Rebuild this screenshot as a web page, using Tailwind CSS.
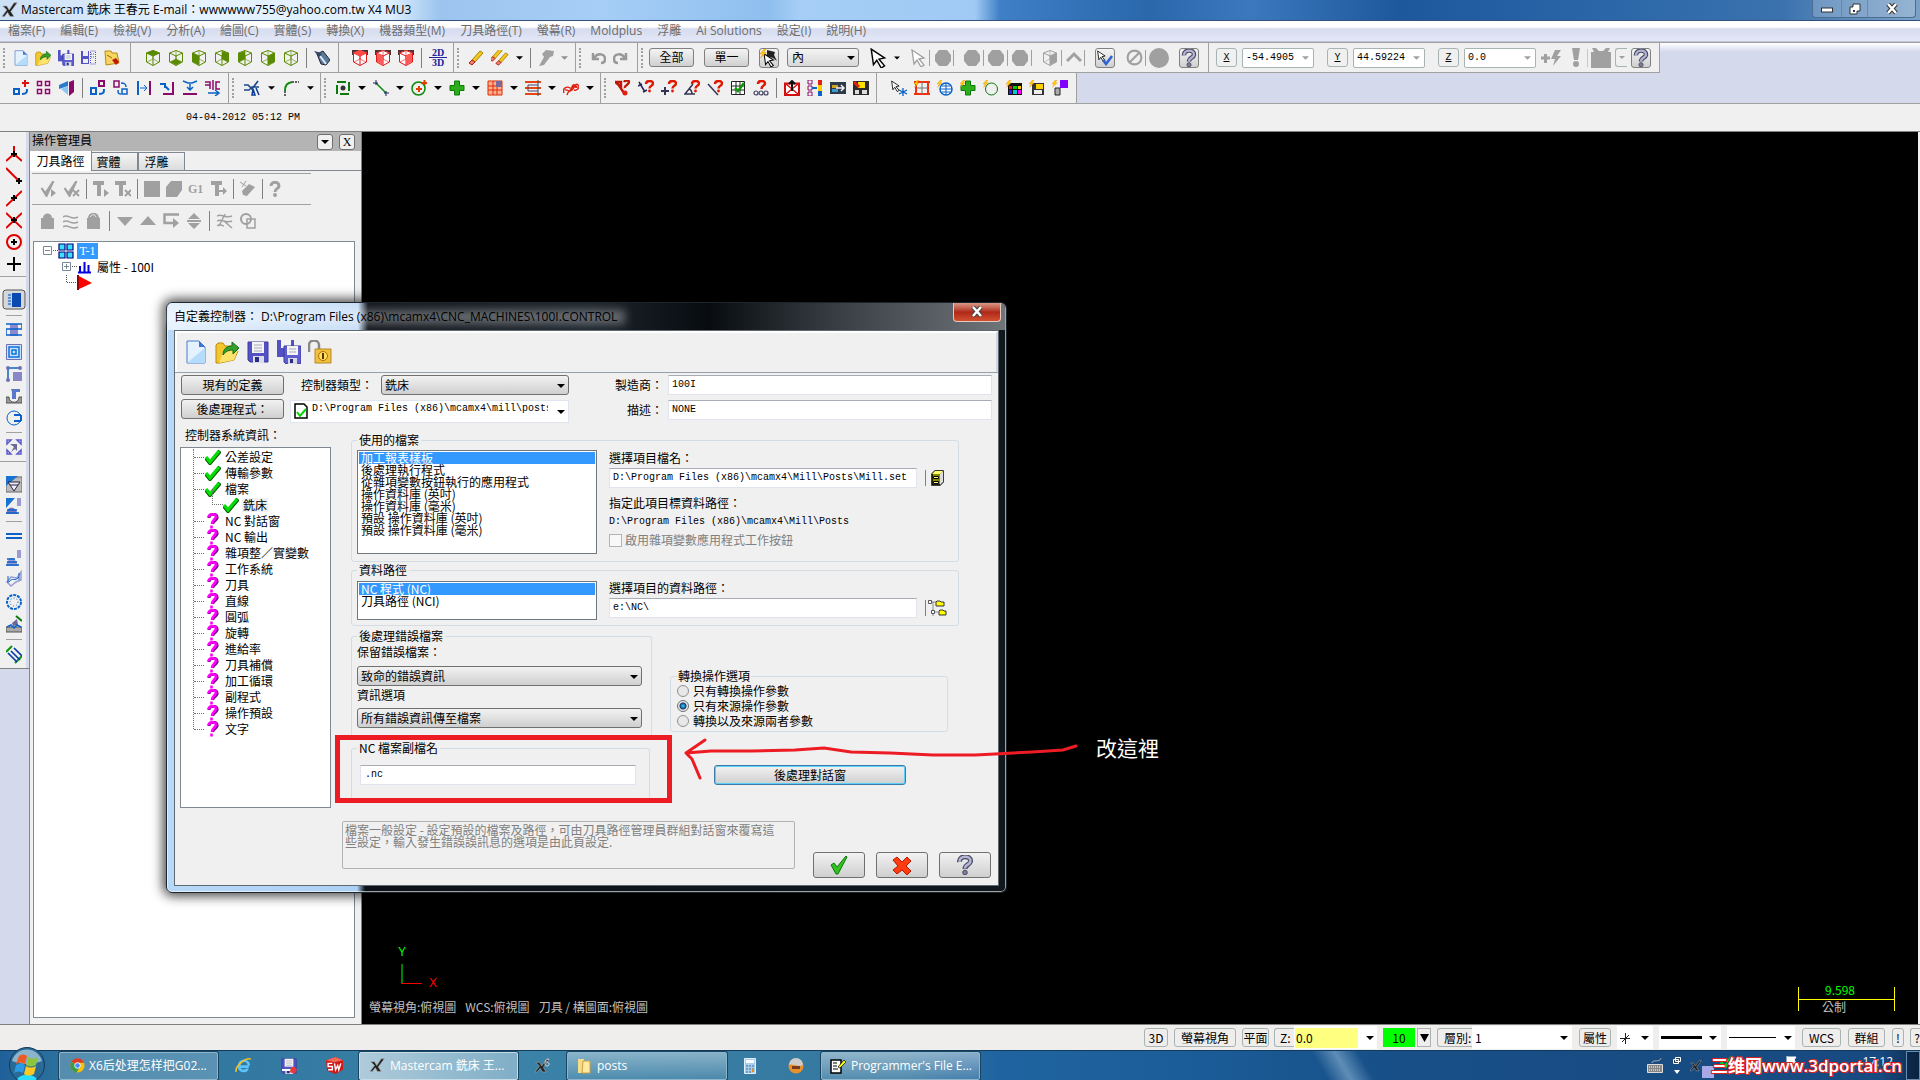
<!DOCTYPE html>
<html lang="zh-Hant">
<head>
    <meta charset="UTF-8">
    <meta name="viewport" content="width=device-width, initial-scale=1.0">
    <script src="https://cdn.jsdelivr.net/npm/@tailwindcss/browser@4"></script>
    <title>Mastercam X4</title>
</head>

<body class="relative h-screen flex flex-col overflow-hidden bg-[#f0f0f0] text-black text-[12px] leading-[14px] font-['Open_Sans','Noto_Sans_CJK_TC',sans-serif]">

    <!-- shared icons -->
    <svg class="hidden">
        <symbol id="arr" viewBox="0 0 8 4"><path d="M0 0h8L4 4z" fill="currentColor"/></symbol>
        <symbol id="new" viewBox="0 0 20 24"><path d="M1 1h12l6 6v16H1z" fill="#e4f1ff" stroke="#4a7bd0"/><path d="M1 23 19 8v15z" fill="#b5dcfa"/><path d="M13 1v6h6z" fill="#3f74d6"/></symbol>
        <symbol id="open" viewBox="0 0 24 24"><path d="M1 23V5l2-2h5l2 3h8v4l5 1-4 9-14 3z" fill="#f4c52c" stroke="#b88a10"/><path d="M4 23 8 12l15-2-4 10z" fill="#ffe36a"/><path d="M8 15c0-6 4-9 9-9V2l7 6-6 6v-4c-4 0-7 1-10 5z" fill="#35a02c" stroke="#146c14"/></symbol>
        <symbol id="disk" viewBox="0 0 22 22"><path d="M1 1h20v20H3l-2-2z" fill="#5252c4" stroke="#3c3ca0"/><path d="M5 1h12v11H5z" fill="#f4f4f4"/><path d="M7 4h8M7 7h8M7 10h8" stroke="#a8a8b8"/><path d="M6 15h11v7H6z" fill="#dcdce8"/><path d="M8 16h4v5H8z" fill="#2c2c80"/></symbol>
        <symbol id="disks" viewBox="0 0 24 24"><path d="M0 0h17v17H0z" fill="#5252c4"/><path d="M4 0h10v8H4z" fill="#f4f4f4"/><path d="M7 6h17v18H9l-2-2z" fill="#5e5ed0" stroke="#3c3ca0"/><path d="M10 6h11v9H10z" fill="#f4f4f4"/><path d="M12 9h7M12 12h7" stroke="#a8a8b8"/><path d="M11 18h9v6h-9z" fill="#d8d8e6"/><path d="M13 19h3v4h-3z" fill="#2c2c80"/></symbol>
        <symbol id="cube" viewBox="0 0 16 16"><path d="M8 .5 14.500 3v9L8 15.500 1.500 12V3zM1.500 3 8 6l6.500-3M8 6v9.500" fill="none" stroke="currentColor"/><path d="M8 1v8L2 12m6-3 6 3" fill="none" stroke="currentColor" stroke-width=".6"/></symbol>
        <symbol id="pencil" viewBox="0 0 16 16"><path d="M4 10 12 1l3 2-8 9z" fill="#f2c81e" stroke="#a88400"/><path d="m1 13 3-3 3 2-3 3z" fill="#f08070" stroke="#b02010"/></symbol>
        <symbol id="q" viewBox="0 0 16 20"><path d="M2.500 7C2 0 14 0 13.500 6.500 13 10 8 9.500 8 14" fill="none" stroke="#4a4a62" stroke-width="5"/><path d="M2.500 7C2 0 14 0 13.500 6.500 13 10 8 9.500 8 13.500" fill="none" stroke="#b4b4d4" stroke-width="2.500"/><circle cx="8" cy="17.500" r="2.300" fill="#7c7c98" stroke="#4a4a62"/></symbol>
        <symbol id="cursor" viewBox="0 0 16 18"><path d="M1 1l12 8-5 1 5 6-3 2-4-7-3 4z" fill="#fff" stroke="currentColor" stroke-width="1.300"/></symbol>
        <symbol id="bolt" viewBox="0 0 16 16"><path d="M6 0 0 7h4l-3 6 8-8H5l4-5z" fill="#ffd200" stroke="#f07800" stroke-width=".6"/></symbol>
        <symbol id="rq" viewBox="0 0 16 16"><path d="M8 4c0-4 7-4 7-.5 0 2.500-3.500 2-3.500 5" fill="none" stroke="#e01800" stroke-width="2.400"/><circle cx="11.500" cy="11" r="1.400" fill="#e01800"/></symbol>
        <symbol id="plus" viewBox="0 0 16 16"><path d="M5.500 1h5v4.500H15v5h-4.500V15h-5v-4.500H1v-5h4.500z" fill="#2cae1c" stroke="#0d7a08"/></symbol>
        <symbol id="ck" viewBox="0 0 16 16"><path d="M1 9l4 5L15 2" fill="none" stroke="#006000" stroke-width="4"/><path d="M1 8l4 5L14 2" fill="none" stroke="#00e000" stroke-width="3"/></symbol>
        <symbol id="mq" viewBox="0 0 12 16"><path d="M2 5c0-5 9-5 8 0-1 3-4 3-4.500 6" fill="none" stroke="#7a007a" stroke-width="3"/><path d="M1.500 4.500c0-4 8-4.500 7.500-.5-1 3-4 3-4 7M4.500 12.500v3" fill="none" stroke="#f0f" stroke-width="2.600"/></symbol>
        <symbol id="gck" viewBox="0 0 16 16"><path d="M1 7l4 5L13 0 6 15z" fill="#a0a0a0" stroke="#a0a0a0" stroke-width="2"/></symbol>
        <symbol id="blob" viewBox="0 0 16 18"><path d="M4 1h8l4 5v6l-4 5H4l-4-5V6z" fill="#a0a0a0"/></symbol>
        <symbol id="mx" viewBox="0 0 20 20"><path d="M1 5h5l3 5 6-9h4l-8 11 4 6h-5l-3-5-4 5H0l6-8z" fill="#222" stroke="#aaa" stroke-width=".8"/></symbol>
    </svg>

    <!-- title bar -->
    <header class="h-[21px] flex items-center pl-[2px] border-b border-[#33507a] bg-[linear-gradient(90deg,#cbdff5_0,#e6f2ff_200px,#deefff_390px,#9cc4ee_440px,#a6cef6_600px,#8fbfee_770px,#a6cef6_800px,#a0caf4_975px,#3f7fc6_1000px,#2a67ab_1150px,#3c78bd_1250px,#1d589c_1400px,#2a66a8_1600px,#3a72ae_1780px,#7aa0c6_1910px)]">
        <svg class="size-4"><use href="#mx"/></svg>
        <h1 class="ml-[3px] whitespace-nowrap">Mastercam 銑床 王春元 E-mail：wwwwww755@yahoo.com.tw X4 MU3</h1>
        <div class="ml-auto mr-[4px] h-[18px] self-start flex border border-t-0 border-[#4c6b90] rounded-b bg-white/20">
            <button aria-label="Minimize" class="w-[28px] grid place-items-center"><svg class="w-3 h-2"><rect x=".5" y="3" width="11" height="4" fill="#fff" stroke="#333"/></svg></button>
            <button aria-label="Restore" class="w-[27px] grid place-items-center border-x border-[#6d88a8]"><svg class="size-3"><path d="M4 1h7v7H8v3H1V4h3z" fill="#fff" stroke="#333"/><path d="M4 7h2v2H4z" fill="#335"/></svg></button>
            <button aria-label="Close" class="w-[47px] grid place-items-center"><svg class="w-3 h-3"><path d="M2 1l8 9M10 1l-8 9" stroke="#333" stroke-width="4.500"/><path d="M2 1l8 9M10 1l-8 9" stroke="#fff" stroke-width="2.500"/></svg></button>
        </div>
    </header>

    <!-- menu -->
    <nav class="h-[21px] flex items-center gap-[15px] pl-[8px] text-[#6c6c6c] whitespace-nowrap border-b border-[#c0c6d6] bg-linear-to-b from-white from-30% via-[#d6dcee] via-40% to-[#e4e8f8]">
        <a href="#">檔案(F)</a><a href="#">編輯(E)</a><a href="#">檢視(V)</a><a href="#">分析(A)</a><a href="#">繪圖(C)</a><a href="#">實體(S)</a><a href="#">轉換(X)</a><a href="#">機器類型(M)</a><a href="#">刀具路徑(T)</a><a href="#">螢幕(R)</a><a href="#">Moldplus</a><a href="#">浮雕</a><a href="#">Ai Solutions</a><a href="#">設定(I)</a><a href="#">說明(H)</a>
    </nav>

    <!-- toolbar row 1 -->
    <div class="h-[31px] flex border-t border-[#a0a0a0] bg-linear-to-b from-white to-[#d4d9ec] to-30% *:shrink-0 *:h-[30px] *:flex *:items-center *:bg-[#f0f0f0] *:border-r *:border-b *:border-[#a0a0a0]">
        <div class="w-[131px] gap-[7px] pl-[3px]">
            <i class="w-[4px] h-5 border-l-2 border-dotted border-[#a0a0a0]"></i>
            <svg class="w-[14px] h-4"><use href="#new"/></svg>
            <svg class="size-4"><use href="#open"/></svg>
            <svg class="size-4"><use href="#disks"/></svg>
            <svg class="size-4" viewBox="0 0 16 16"><path d="M0 1h8v13H0z" fill="#5252c4"/><path d="M2 1h5v5H2zM2 9h5v4H2z" fill="#eee"/><path d="M9.500 1h5v13h-5zM10 7h4M10 4h4" fill="none" stroke="#5252c4" stroke-dasharray="1 1"/></svg>
            <svg class="size-4" viewBox="0 0 16 16"><path d="M1 1h6l1 2h5l2 10-13 2z" fill="#f6d560" stroke="#b88a10"/><path d="M3 5l5 3" stroke="#a60"/><path d="M8 10l4-2 3 4-3 3z" fill="#c01808"/></svg>
        </div>
        <div class="w-[208px] gap-[7px] pl-[14px] text-[#5a8a00]">
            <svg class="size-4"><path d="M8 0l7 3-7 3-7-3z" fill="currentColor"/><use href="#cube"/></svg>
            <svg class="size-4"><use href="#cube"/><path d="M8 9l6 3-6 3-6-3z" fill="currentColor"/></svg>
            <svg class="size-4"><use href="#cube"/><path d="M2 3l6 3v9l-6-3z" fill="currentColor"/></svg>
            <svg class="size-4"><use href="#cube"/><path d="M8 1l6 2v9L8 9z" fill="currentColor"/></svg>
            <svg class="size-4"><use href="#cube"/><path d="M8 1 2 3v9l6-3z" fill="currentColor"/></svg>
            <svg class="size-4"><use href="#cube"/><path d="M14 3 8 6v9l6-3z" fill="currentColor"/></svg>
            <svg class="size-4"><use href="#cube"/></svg>
            <i class="w-px h-5 bg-[#808080]"></i>
            <svg class="size-4" viewBox="0 0 16 16"><path d="M3 4l6-3 7 9-4 5-5-1z" fill="#5a7a9a" stroke="#223"/><path d="M6 6l6 8" stroke="#dde8f8" stroke-width="2"/><path d="M0 1l4 1 4 2-3 3z" fill="#346"/></svg>
        </div>
        <div class="w-[115px] gap-[7px] pl-[13px] text-[#e01818]">
            <svg class="size-4"><path d="M0 0h16v5H0z" fill="#503030"/><path d="M8 0l7 3v9l-7 3-7-3V3z" fill="#fff"/><use href="#cube"/><path d="M8 0l7 3-7 3-7-3z" fill="#ff4a4a"/></svg>
            <svg class="size-4"><path d="M0 0h16v5H0z" fill="#503030"/><path d="M8 0l7 3v9l-7 3-7-3V3z" fill="#fff"/><use href="#cube"/><path d="M2 3l6 3v9l-6-3z" fill="#ff5a5a"/></svg>
            <svg class="size-4"><path d="M0 0h16v5H0z" fill="#503030"/><path d="M8 0l7 3v9l-7 3-7-3V3z" fill="#fff"/><use href="#cube"/><path d="M14 3 8 6v9l6-3z" fill="#ff5a5a"/></svg>
            <i class="w-px h-5 bg-[#808080]"></i>
            <button class="w-[18px] text-[10px] leading-[9px] font-bold text-[#20209a] font-['Liberation_Serif',serif]"><span class="block border-b border-[#20209a]">2D</span><span class="block">3D</span></button>
        </div>
        <div class="w-[122px] gap-[7px] pl-[3px]">
            <i class="w-[4px] h-5 border-l-2 border-dotted border-[#a0a0a0]"></i>
            <svg class="size-4"><use href="#pencil"/></svg>
            <svg class="w-[18px] h-4"><use href="#pencil" x="-2" y="-2" width="14" height="14"/><use href="#pencil" x="4" y="2" width="14" height="14"/></svg>
            <svg class="w-[7px] h-1"><use href="#arr"/></svg>
            <i class="w-px h-5 bg-[#808080]"></i>
            <svg class="size-4 text-[#a0a0a0]" viewBox="0 0 16 16"><path d="M4 4l4-4 8 1-1 5-3 1-6 8-5 1 5-9z" fill="currentColor"/></svg>
            <svg class="w-[7px] h-1 text-[#909090]"><use href="#arr"/></svg>
        </div>
        <div class="w-[62px] gap-[7px] pl-[3px]">
            <i class="w-[4px] h-5 border-l-2 border-dotted border-[#a0a0a0]"></i>
            <svg class="size-4" viewBox="0 0 16 16"><path d="M3 3v6h6M4 8c4-6 11-4 11 1 0 3-2 4-4 4" fill="none" stroke="#989898" stroke-width="2.500"/></svg>
            <svg class="size-4" viewBox="0 0 16 16"><path d="M13 3v6H7M12 8C8 2 1 4 1 9c0 3 2 4 4 4" fill="none" stroke="#989898" stroke-width="2.500"/></svg>
        </div>
        <div class="w-[571px] pl-[3px]">
            <i class="w-[8px] h-5 border-l-2 border-dotted border-[#a0a0a0]"></i>
            <button class="w-[45px] h-[19px] border border-[#808080] rounded-[3px] bg-linear-to-b from-[#f4f4f4] to-[#d0d0d0]">全部</button>
            <button class="ml-[10px] w-[45px] h-[19px] border border-[#808080] rounded-[3px] bg-linear-to-b from-[#f4f4f4] to-[#d0d0d0]">單一</button>
            <button aria-label="Quick select" class="ml-[10px] size-[20px] border border-[#808080] rounded-[3px] bg-linear-to-b from-[#f4f4f4] to-[#d0d0d0] grid place-items-center"><svg class="size-[18px]"><path d="M7 1l8 2-1 3 3 6-4-3-6-2z" fill="#222"/><use href="#cursor" x="3" y="4" width="13" height="14"/><use href="#bolt" width="11" height="11"/></svg></button>
            <div class="relative ml-[8px]">
                <select aria-label="Window mode" class="appearance-none w-[72px] h-[19px] pl-[4px] leading-[16px] border border-[#808080] rounded-[3px] bg-linear-to-b from-[#f4f4f4] to-[#d8d8d8]"><option>內</option></select>
                <svg class="absolute right-[4px] top-[8px] w-2 h-1 pointer-events-none"><use href="#arr"/></svg>
            </div>
            <svg class="ml-[11px] w-[18px] h-5"><use href="#cursor"/></svg>
            <svg class="ml-[6px] w-[6px] h-1"><use href="#arr"/></svg>
            <svg class="ml-[10px] w-[18px] h-[18px] text-[#a0a0a0]"><use href="#cursor"/></svg>
            <i class="w-px ml-[1px] h-4 bg-[#a0a0a0]"></i>
            <svg class="ml-[5px] w-4 h-[18px]"><use href="#blob"/></svg>
            <i class="ml-[2px] w-px h-4 bg-[#a0a0a0]"></i>
            <svg class="ml-[10px] w-4 h-[18px]"><use href="#blob"/></svg>
            <i class="ml-[3px] w-px h-4 bg-[#a0a0a0]"></i>
            <svg class="ml-[4px] w-4 h-[18px]"><use href="#blob"/></svg>
            <i class="ml-[3px] w-px h-4 bg-[#a0a0a0]"></i>
            <svg class="ml-[4px] w-4 h-[18px]"><use href="#blob"/></svg>
            <i class="ml-[3px] w-px h-4 bg-[#a0a0a0]"></i>
            <svg class="ml-[10px] size-4 text-[#a0a0a0]"><use href="#cube"/><path d="M8 6v9l6-3V3z" fill="#a0a0a0"/></svg>
            <i class="ml-[3px] w-px h-4 bg-[#a0a0a0]"></i>
            <svg class="ml-[4px] size-4" viewBox="0 0 16 16"><path d="M1 11 8 4l7 7" fill="none" stroke="#a0a0a0" stroke-width="3"/></svg>
            <i class="ml-[2px] w-px h-4 bg-[#a0a0a0]"></i>
            <button aria-label="Verify" class="ml-[10px] size-[20px] border border-[#808080] rounded-[3px] bg-linear-to-b from-[#f4f4f4] to-[#d0d0d0] grid place-items-center"><svg class="size-4"><use href="#cursor" width="10" height="12"/><path d="M6 10l3 4 6-8" fill="none" stroke="#2c62d0" stroke-width="2.500"/></svg></button>
            <svg class="ml-[11px] size-[17px]" viewBox="0 0 16 16"><circle cx="8" cy="8" r="6.500" fill="none" stroke="#a0a0a0" stroke-width="2"/><path d="M3 13 13 3" stroke="#a0a0a0" stroke-width="2"/></svg>
            <i class="ml-[2px] w-px h-4 bg-[#a0a0a0]"></i>
            <svg class="ml-[3px] w-5 h-5"><circle cx="10" cy="10" r="10" fill="#a0a0a0"/></svg>
            <button aria-label="Help" class="ml-[10px] size-[20px] border border-[#808080] rounded-[3px] bg-linear-to-b from-[#f4f4f4] to-[#d0d0d0] grid place-items-center"><svg class="w-4 h-[18px]"><use href="#q"/></svg></button>
        </div>
        <form class="w-[451px] pl-[7px] font-['Liberation_Mono',monospace] text-[10px]">
            <label for="x" class="w-[21px] h-[19px] grid place-items-center border border-[#a8b4b4] rounded-[3px] underline">X</label>
            <input id="x" value="-54.4905" class="ml-[5px] w-[72px] h-[20px] pl-[3px] border border-[#a8b4b4] rounded-[2px] bg-white">
            <svg class="-ml-[12px] w-[7px] h-1 text-[#a0a0a0]"><use href="#arr"/></svg>
            <label for="y" class="ml-[18px] w-[21px] h-[19px] grid place-items-center border border-[#a8b4b4] rounded-[3px] underline">Y</label>
            <input id="y" value="44.59224" class="ml-[5px] w-[72px] h-[20px] pl-[3px] border border-[#a8b4b4] rounded-[2px] bg-white">
            <svg class="-ml-[12px] w-[7px] h-1 text-[#a0a0a0]"><use href="#arr"/></svg>
            <label for="z" class="ml-[18px] w-[21px] h-[19px] grid place-items-center border border-[#a8b4b4] rounded-[3px] underline">Z</label>
            <input id="z" value="0.0" class="ml-[5px] w-[72px] h-[20px] pl-[3px] border border-[#a8b4b4] rounded-[2px] bg-white">
            <svg class="-ml-[12px] w-[7px] h-1 text-[#a0a0a0]"><use href="#arr"/></svg>
            <svg class="ml-[10px] w-5 h-4"><path d="M0 8h9M4.500 4v9" stroke="#a0a0a0" stroke-width="3"/><path d="M14 0h6l-4 6h4l-8 10 2-7h-4z" fill="#a0a0a0"/></svg>
            <svg class="ml-[11px] w-[8px] h-5"><path d="M0 0h8L6 12H2z" fill="#a0a0a0"/><circle cx="4" cy="16" r="3" fill="#a0a0a0"/></svg>
            <svg class="ml-[7px] w-[25px] h-5"><path d="M0 1v18" stroke="#a0a0a0"/><path d="M4 4h3L5 0h4l3 3h4l3-3h4l-2 4h3v16H4z" fill="#a0a0a0"/></svg>
            <span class="ml-[3px] w-[12px] h-[19px] grid place-items-center border border-r-0 border-[#a8b4b4] rounded-l-[3px]"><svg class="w-[6px] h-[3px] text-[#a0a0a0]"><use href="#arr"/></svg></span>
            <button type="button" aria-label="Help" class="ml-[4px] size-[20px] border border-[#808080] rounded-[3px] bg-linear-to-b from-[#f4f4f4] to-[#d0d0d0] grid place-items-center"><svg class="w-4 h-[18px]"><use href="#q"/></svg></button>
        </form>
    </div>

    <!-- toolbar row 2 -->
    <div class="h-[31px] flex bg-[#d4d9ec] border-b border-[#a0a0a0] *:shrink-0 *:flex *:items-center *:bg-[#f0f0f0] *:border-r *:border-[#a0a0a0]">
        <div class="w-[229px] gap-[7px] pl-[13px]">
            <svg class="size-4" viewBox="0 0 16 16"><path d="M12 0v7M9 3h7" stroke="#e01010" stroke-width="2"/><path d="M1 9h5v5H1zM9 14c5 0 5-2 5-5" fill="none" stroke="#0a62c8" stroke-width="2"/></svg>
            <svg class="size-4" viewBox="0 0 16 16"><path d="M1.500 1.500h4v4h-4zM9.500 1.500h4v4h-4zM1.500 9.500h4v4h-4zM9.500 9.500h4v4h-4z" fill="none" stroke="#8a0a6a" stroke-width="1.500"/></svg>
            <svg class="size-4" viewBox="0 0 16 16"><path d="M0 5l9-4v5l-9 3z" fill="#2c7ad0"/><path d="M2 9l7-3v9z" fill="#8cc4f4"/><path d="M10 2l5-2v12l-5 4z" fill="#8a0a6a"/></svg>
            <i class="w-px h-5 bg-[#808080]"></i>
            <svg class="size-4" viewBox="0 0 16 16"><path d="M9 1h5v5H9z" fill="none" stroke="#8a0a6a" stroke-width="2"/><path d="M1 8h5v6H1zM9 14c5 0 5-2 5-5" fill="none" stroke="#0a62c8" stroke-width="2"/></svg>
            <svg class="size-4" viewBox="0 0 16 16"><path d="M1 1h5v6H1z" fill="none" stroke="#8a0a6a" stroke-width="1.500"/><path d="M9 9h5v5H9zM5 10c0 4 1 4 3 4M8 3c4 0 5 1 5 4" fill="none" stroke="#0a62c8" stroke-width="1.500"/></svg>
            <svg class="size-4" viewBox="0 0 16 16"><path d="M2 1v14" stroke="#0a62c8" stroke-width="2"/><path d="M14 1v14" stroke="#8a0a6a" stroke-width="2"/><path d="M4 8h7M8 5l3 3-3 3" fill="none" stroke="#0a62c8"/></svg>
            <svg class="size-4" viewBox="0 0 16 16"><path d="M1 4h5v4M6 6l4 4" fill="none" stroke="#0a62c8" stroke-width="2"/><path d="M14 2v12H4" fill="none" stroke="#8a0a6a" stroke-width="2"/></svg>
            <svg class="size-4" viewBox="0 0 16 16"><path d="M1 1l5 2h4l5-2M8 4v6M5 7l3 3 3-3" fill="none" stroke="#0a62c8" stroke-width="1.500"/><path d="M1 14h14" stroke="#8a0a6a" stroke-width="2"/></svg>
            <svg class="size-4" viewBox="0 0 16 16"><path d="M0 2h5v7M0 5h5M8 0v10M15 2h-4v7h4" fill="none" stroke="#8a0a6a" stroke-width="1.500"/><path d="M3 13h10M10 10l4 3-4 3" fill="none" stroke="#0a62c8" stroke-width="1.500"/></svg>
        </div>
        <div class="w-[92px] gap-[8px] pl-[3px]">
            <i class="w-[4px] h-5 border-l-2 border-dotted border-[#a0a0a0]"></i>
            <svg class="size-4" viewBox="0 0 16 16"><path d="M0 5h4l4 4 6-8M0 10h5l3-3h7" fill="none" stroke="#1a4a8a" stroke-width="1.700"/><path d="M9 9l-1 6h3zM12 8l3 7" fill="none" stroke="#0a3a98" stroke-width="1.500"/></svg>
            <svg class="w-[7px] h-1"><use href="#arr"/></svg>
            <svg class="size-4" viewBox="0 0 16 16"><path d="M2 11C2 5 4 3 9 2" fill="none" stroke="#0a8a0a" stroke-width="2"/><path d="M9 2h7M2 11v5" stroke="#333" stroke-width="1.500" stroke-dasharray="2 1"/></svg>
            <svg class="w-[7px] h-1"><use href="#arr"/></svg>
        </div>
        <div class="w-[280px] gap-[7px] pl-[3px]">
            <i class="w-[4px] h-5 border-l-2 border-dotted border-[#a0a0a0]"></i>
            <svg class="size-4" viewBox="0 0 16 16"><path d="M2 2h12v12H2z" fill="none" stroke="#0a7a0a" stroke-width="2" stroke-dasharray="9 3"/><circle cx="8" cy="8" r="2.500" fill="#333"/></svg><svg class="w-[8px] h-1"><use href="#arr"/></svg>
            <svg class="size-4" viewBox="0 0 16 16"><path d="M3 3l10 10" stroke="#0a8a0a" stroke-width="1.500"/><path d="M0 3h5M3 0v5M11 13h5M13 11v5" stroke="#226"/></svg><svg class="w-[8px] h-1"><use href="#arr"/></svg>
            <svg class="size-4" viewBox="0 0 16 16"><circle cx="7.500" cy="8.500" r="6.500" fill="none" stroke="#0a8a0a" stroke-width="1.500"/><path d="M5 9h6M8 6v6M11 3h5M13.500 0v5" stroke="#e04000" stroke-width="2"/></svg><svg class="w-[8px] h-1"><use href="#arr"/></svg>
            <svg class="size-4"><use href="#plus"/></svg><svg class="w-[8px] h-1"><use href="#arr"/></svg>
            <svg class="size-4" viewBox="0 0 16 16"><path d="M1 1h14v14H1z" fill="#ffb090" stroke="#e02800"/><path d="M6 1v14M10 1v14M1 6h14M1 10h14" stroke="#e02800"/><path d="M9 1h6v6H9z" fill="#7a6a9a"/></svg><svg class="w-[8px] h-1"><use href="#arr"/></svg>
            <svg class="size-4" viewBox="0 0 16 16"><path d="M0 2h16M0 8h16M0 14h16" stroke="#e04a10" stroke-width="2"/><path d="M3 5h10M3 11h10M3 5v6M13 0v16" stroke="#446" /></svg><svg class="w-[8px] h-1"><use href="#arr"/></svg>
            <svg class="size-4" viewBox="0 0 16 16"><path d="M1 13c-2-5 3-7 6-5s5-6 8-3-2 6-4 5M2 10c3-1 5 4 8-1s4-2 4-1M4 15c1-5 4-3 5-8 1-4 4-2 4 1" fill="none" stroke="#e02010" stroke-width="1.400"/></svg><svg class="w-[8px] h-1"><use href="#arr"/></svg>
        </div>
        <div class="w-[276px] gap-[7px] pl-[3px]">
            <i class="w-[4px] h-5 border-l-2 border-dotted border-[#a0a0a0]"></i>
            <svg class="size-4" viewBox="0 0 16 16"><path d="M0 2h6v5zM3 4l6 9M10 8c-1-3 4-3 4-6 0-2-4-2-5 0" fill="none" stroke="#c01808" stroke-width="2.400"/><circle cx="10" cy="13" r="2.500" fill="#e02010"/></svg>
            <svg class="size-4"><path d="M1 2l6 10M0 6l4-2M5 12l4-2" stroke="#225" stroke-width="1.500"/><use href="#rq"/></svg>
            <svg class="size-4"><path d="M0 11h8M4 7v8" stroke="#335" stroke-width="2"/><use href="#rq"/></svg>
            <svg class="size-4"><path d="M9 4 1 14h10M5 9c3 1 3 3 3 5" fill="none" stroke="#335" stroke-width="1.500"/><use href="#rq"/></svg>
            <svg class="size-4"><path d="M1 4l10 11" stroke="#335" stroke-width="1.500"/><use href="#rq"/></svg>
            <svg class="size-4" viewBox="0 0 16 16"><path d="M1.500 1.500h13v13h-13zM1 6h14M1 10h14M6 1v14M10 1v14" fill="#fff" stroke="#222"/><path d="M5 8l3 3 6-8" fill="none" stroke="#0a9a0a" stroke-width="2.500"/></svg>
            <svg class="size-4"><path d="M5 4c0-4 7-4 7-.5C12 6 8.500 5 8.500 9" fill="none" stroke="#e01800" stroke-width="2.500"/><g fill="none" stroke="#446" stroke-width="1.200"><circle cx="3" cy="13" r="2"/><circle cx="8" cy="13" r="2"/><circle cx="13" cy="13" r="2"/></g></svg>
            <i class="w-px h-5 bg-[#808080]"></i>
            <svg class="size-4" viewBox="0 0 16 16"><path d="M1 3.500h14V15H1z" fill="#fff" stroke="#d01010" stroke-width="2"/><path d="M2 4l12 10M14 4 2 14" stroke="#e01010" stroke-width="1.500"/><path d="M8 11V1M5 4l3-3 3 3" fill="none" stroke="#111" stroke-width="2"/></svg>
            <svg class="size-4" viewBox="0 0 16 16"><path d="M1 0h4v4H1zM1 6h4v4H1zM1 12h4v4H1z" fill="none" stroke="#8a0a6a"/><path d="M11 0h4v5h-4z" fill="#e02010"/><path d="M11 5h4v6h-4z" fill="#fc0"/><path d="M11 11h4v5h-4z" fill="#0a62c8"/><path d="M5 8h5" stroke="#0a62c8" stroke-width="2"/></svg>
            <svg class="size-4" viewBox="0 0 16 16"><path d="M0 2h16v12H0z" fill="#2c3a4a"/><path d="M2 5h6v3H2z" fill="#d0a020"/><path d="M2 9h6v3H2z" fill="#3a9ad0"/><path d="M6 8h8M11 5l3 3-3 3" fill="none" stroke="#eee" stroke-width="1.500"/></svg>
            <svg class="size-4" viewBox="0 0 16 16"><path d="M0 1h16v14H0z" fill="#2c2c2c"/><path d="M5 2h7v6H5z" fill="#ffe000"/><path d="M1 2l5 5" stroke="#e02010" stroke-width="3"/><path d="M2 10h4v4H2zM9 10h5v4H9z" fill="#ddd"/></svg>
        </div>
        <div class="w-[200px] gap-[7px] pl-[14px]">
            <svg class="size-4"><use href="#cursor" width="10" height="12"/><path d="M12 8v8M8 10l8 4M16 10l-8 4" stroke="#0a62c8" stroke-width="1.300"/></svg>
            <svg class="size-4"><path d="M2 1v14M14 1v14M0 2h16M0 14h16" stroke="#f03010" stroke-width="2"/><path d="M8 2v12M3 8h10" stroke="#777"/><use href="#bolt" width="9" height="9"/></svg>
            <svg class="size-4"><circle cx="9" cy="9" r="6" fill="#fff" stroke="#0a62c8" stroke-width="1.500"/><path d="M3 9h12M9 3v12M5 6h8M5 12h8" stroke="#0a62c8"/><use href="#bolt" width="9" height="9"/></svg>
            <svg class="size-4"><use href="#plus"/><use href="#bolt" width="9" height="9"/></svg>
            <svg class="size-4"><circle cx="8.500" cy="9" r="6" fill="none" stroke="#0a7a0a"/><use href="#bolt" width="9" height="9"/></svg>
            <svg class="size-4"><path d="M2 3h14v12H2z" fill="#111"/><path d="M3 6h3v3H3z" fill="#e02010"/><path d="M7 6h4v3H7z" fill="#0c0"/><path d="M12 6h3v3h-3z" fill="#fc0"/><path d="M3 10h3v4H3z" fill="#22f"/><path d="M7 10h4v4H7z" fill="#0cc"/><path d="M12 10h3v4h-3z" fill="#f0f"/><use href="#bolt" width="9" height="9"/></svg>
            <svg class="size-4"><path d="M3 3h12v12H3z" fill="#333"/><path d="M7 4h7v5H7z" fill="#ffd000"/><path d="M5 10h8v4H5z" fill="#eee"/><use href="#bolt" width="9" height="9"/></svg>
            <svg class="size-4"><path d="M8 0h8v8H8z" fill="#8000ff"/><path d="M3 8h5v7H3z" fill="#aaa" stroke="#222"/><use href="#bolt" width="9" height="9"/></svg>
        </div>
    </div>

    <!-- info strip -->
    <div class="h-[27px] flex items-center pl-[186px] font-['Liberation_Mono',monospace] text-[10px]">04-04-2012 05:12 PM</div>

    <main class="flex-1 min-h-0 flex border-t border-[#808080]">

        <!-- vertical toolbars -->
        <aside class="w-[30px] shrink-0 bg-[#d4d9ec] border-r border-[#808894]">
            <div class="w-[26px] pt-[11px] pl-[6px] pb-[1px] bg-[#f0f0f0] *:h-[22px] *:w-4">
                <svg viewBox="0 0 16 22"><path d="M8 3v5M8 11 0 18M8 11l8 7" stroke="#e00000" stroke-width="2"/><path d="M5 11h6M8 8v6" stroke="#000" stroke-width="2"/></svg>
                <svg viewBox="0 0 16 22"><path d="M0 3l12 12" stroke="#e00000" stroke-width="2"/><path d="M10 16h6M13 13v6" stroke="#000" stroke-width="2"/></svg>
                <svg viewBox="0 0 16 22"><path d="M0 19 16 4" stroke="#e00000" stroke-width="2"/><path d="M5 11h6M8 8v6" stroke="#000" stroke-width="2"/></svg>
                <svg viewBox="0 0 16 22"><path d="M0 4l16 15M16 4 0 19" stroke="#e00000" stroke-width="2"/><path d="M5 11h6M8 8v6" stroke="#000" stroke-width="2"/></svg>
                <svg viewBox="0 0 16 22"><circle cx="8" cy="11" r="7" fill="none" stroke="#e00000" stroke-width="2"/><path d="M5 11h6M8 8v6" stroke="#000" stroke-width="2"/></svg>
                <svg viewBox="0 0 16 22"><path d="M1 11h14M8 4v14" stroke="#000" stroke-width="2"/></svg>
            </div>
            <div class="w-[26px] pt-[12px] pl-[6px] pb-[3px] bg-[#f0f0f0] border-t border-[#a0a0a0] *:h-[22px] *:w-4">
                <svg class="overflow-visible" viewBox="0 0 16 22"><rect x="-3" y="1" width="22" height="19" rx="3" fill="#d8d8d8" stroke="#555"/><path d="M1 4h14v14H1z" fill="#0a4ab0"/><path d="M1 4h5v14H1z" fill="#bcd6f4"/><path d="M2 6h3M2 9h3M2 12h3M2 15h3" stroke="#0a4ab0"/></svg>
                <hr class="mt-[4px] mb-[3px] h-px! border-[#a0a0a0]">
                <svg viewBox="0 0 16 22"><path d="M4 5h8v12H4z" fill="#8a8ad0"/><path d="M0 5h16M16 5v5H0v6h16" fill="none" stroke="#0a62c8" stroke-width="1.500"/></svg>
                <svg viewBox="0 0 16 22"><path d="M.5 3.500h15v15H.5z" fill="#cce4ff" stroke="#7070b0"/><path d="M3 6h10v10H3zM6 9h4v4H6z" fill="none" stroke="#0a72e0" stroke-width="1.500"/></svg>
                <svg viewBox="0 0 16 22"><path d="M2 17V5h12" fill="none" stroke="#0a62c8" stroke-width="1.500"/><circle cx="2" cy="5" r="2" fill="#7070b8"/><circle cx="14" cy="5" r="2" fill="#7070b8"/><circle cx="2" cy="17" r="2" fill="#7070b8"/><path d="M7 9h9v9H7z" fill="#8888c8"/></svg>
                <svg viewBox="0 0 16 22"><path d="M5 4h9v3h-4v7H6V7z" fill="#5a78c8"/><path d="M0 12h3c0 7 10 7 10 0h3v6H0z" fill="#999" stroke="#555"/></svg>
                <svg viewBox="0 0 16 22"><circle cx="8" cy="11" r="7" fill="none" stroke="#0a62c8"/><path d="M8 8h7M8 14h7M15 8v6" stroke="#0a62c8" stroke-width="2"/></svg>
                <hr class="my-[3px] h-px! border-[#a0a0a0]">
                <svg viewBox="0 0 16 22"><path d="M1 4h4L1 8zM15 4h-4l4 4zM1 18h4l-4-4zM15 18h-4l4-4z" fill="none" stroke="#5a5ad0" stroke-width="1.500"/><path d="M4 8h7v7l-2-2-4 3 3-5z" fill="#6a6a98"/></svg>
            </div>
            <div class="w-[26px] pt-[11px] pl-[6px] pb-[3px] bg-[#f0f0f0] border-t border-[#a0a0a0] *:h-[22px] *:w-4">
                <svg viewBox="0 0 16 22"><path d="M0 4h16v15H0z" fill="#bbb" stroke="#666"/><path d="M0 3h12L0 13z" fill="#1a72d0"/><path d="M2 9h12l-6 9z" fill="#eef" stroke="#223"/><path d="M4 12h8" stroke="#223"/></svg>
                <svg viewBox="0 0 16 22"><path d="M0 3h9L0 13z" fill="#1a72d0"/><path d="M11 3h4v8h-4z" fill="#9a9ad4"/><path d="M0 19c2-8 8-9 12 0z" fill="#7a7ac0"/><path d="M1 15h10M0 18h13" stroke="#0a62c8" stroke-width="1.500"/></svg>
                <hr class="mt-[4px] mb-[3px] h-px! border-[#a0a0a0]">
                <svg viewBox="0 0 16 22"><path d="M0 9h16M0 13h16" stroke="#0a62c8" stroke-width="2"/></svg>
                <svg viewBox="0 0 16 22"><path d="M11 3h4v8h-4z" fill="#9a9ad4"/><path d="M0 19c2-9 8-12 12 0z" fill="#9a9ad4"/><path d="M1 12h8M1 15h10M0 18h13" stroke="#0a62c8" stroke-width="1.500"/></svg>
                <svg viewBox="0 0 16 22"><path d="M1 13 5 8l6 1 4-6v8l-5 2-5 4z" fill="none" stroke="#9a9ad4" stroke-width="1.500"/><path d="M2 7v7M13 4v7M3 13c3-5 6 0 10-5" fill="none" stroke="#0a62c8"/></svg>
                <svg viewBox="0 0 16 22"><circle cx="8" cy="11" r="7" fill="none" stroke="#0a62c8" stroke-width="2" stroke-dasharray="3 1"/><circle cx="8" cy="11" r="4" fill="none" stroke="#0a62c8" stroke-dasharray="1 2"/></svg>
                <svg viewBox="0 0 16 22"><path d="M10 3l6 5" stroke="#0a7a0a" stroke-width="2"/><path d="M6 10l5-4 1 6-5 1z" fill="#6a6a98"/><path d="M0 14h16v5H0z" fill="#aaa" stroke="#555"/><path d="M1 14l4-2 3 3 3-3 4 2" fill="none" stroke="#0a62c8" stroke-width="1.500"/></svg>
                <hr class="mt-[4px] mb-[3px] h-px! border-[#a0a0a0]">
                <svg viewBox="0 0 16 22"><path d="M0 9l6-6M9 20l7-7" stroke="#0a9a0a" stroke-width="2"/><path d="M2 10l9 9M5 8l9 9M8 5l8 8" stroke="#0a3aa8" stroke-width="1.700"/></svg>
            </div>
            <hr class="border-[#808080]">
        </aside>

        <!-- operations manager -->
        <section class="w-[331px] shrink-0 flex flex-col pb-[6px] font-['Noto_Sans_CJK_TC',sans-serif]">
            <div class="h-[19px] flex items-center gap-[6px] pl-[2px] pr-[6px] bg-[#b4b4b4]">
                <h2 class="mr-auto pb-[3px]">操作管理員</h2>
                <button aria-label="Options" class="size-[16px] grid place-items-center bg-[#f0f0f0] border border-[#707070] rounded-[3px]"><svg class="w-2 h-1"><use href="#arr"/></svg></button>
                <button aria-label="Close" class="size-[16px] grid place-items-center bg-[#f0f0f0] border border-[#707070] rounded-[3px] font-['Liberation_Serif',serif]">X</button>
            </div>
            <div role="tablist" class="h-[20px] flex items-end border-b border-[#808894]">
                <button role="tab" class="w-[62px] h-[20px] -mb-px bg-white border-r border-[#808894]">刀具路徑</button>
                <button role="tab" class="w-[47px] h-[18px] pr-[12px] border-t border-r-2 border-[#808894] bg-linear-to-b from-[#f4f4f4] to-[#dcdcdc]">實體</button>
                <button role="tab" class="w-[46px] h-[18px] pr-[10px] border-t border-r border-[#808894] bg-linear-to-b from-[#f4f4f4] to-[#dcdcdc]">浮雕</button>
            </div>
            <div class="mt-[2px] ml-[2px] w-[279px] h-[32px] flex items-center gap-[6px] pl-[8px] border-y border-[#a0a0a0] text-[#a0a0a0]">
                <svg class="w-[17px] h-4"><use href="#gck"/><path d="M11 8v8l5-4z" fill="currentColor"/></svg>
                <svg class="w-[17px] h-4"><use href="#gck"/><path d="M10 9l6 6M16 9l-6 6" stroke="currentColor" stroke-width="2"/></svg>
                <i class="w-px h-5 bg-[#808080]"></i>
                <svg class="size-4"><path d="M0 2h11M6 2v13" stroke="currentColor" stroke-width="4"/><path d="M11 8v8l5-4z" fill="currentColor"/></svg>
                <svg class="size-4"><path d="M0 2h11M6 2v13" stroke="currentColor" stroke-width="4"/><path d="M10 9l6 6M16 9l-6 6" stroke="currentColor" stroke-width="2"/></svg>
                <i class="w-px h-5 bg-[#808080]"></i>
                <svg class="size-4"><path d="M0 0h16v16H0z" fill="currentColor"/></svg>
                <svg class="size-4"><path d="M5 0h11v9l-5 7H0V6z" fill="currentColor"/></svg>
                <b class="w-[17px] text-[12px] font-['Liberation_Serif',serif]">G1</b>
                <svg class="size-4"><path d="M0 2h11M6 2v13" stroke="currentColor" stroke-width="4"/><path d="M8 9h4V6l4 4-4 4v-3H8z" fill="currentColor"/></svg>
                <i class="w-px h-5 bg-[#808080]"></i>
                <svg class="size-4"><path d="M2 10 9 3l6 3-8 9-4-1z" fill="currentColor"/><path d="M0 1l6 4M6 0 2 6" stroke="currentColor"/></svg>
                <i class="w-px h-5 bg-[#808080]"></i>
                <svg class="w-3 h-4"><path d="M2 5c0-5 8-5 8 0 0 3-4 2-4 6" fill="none" stroke="currentColor" stroke-width="3"/><circle cx="6" cy="14" r="2" fill="currentColor"/></svg>
            </div>
            <div class="ml-[2px] h-[31px] flex items-center gap-[7px] pl-[8px] text-[#a0a0a0]">
                <svg class="w-[16px] h-4"><path d="M1 5h13v11H1zM3 5c0-6 9-6 9 0" fill="currentColor"/></svg>
                <svg class="w-[16px] h-4"><path d="M0 4c5-4 8 4 15 0M0 9c5-4 8 4 15 0M0 14c5-4 8 4 15 0" fill="none" stroke="currentColor" stroke-width="1.500"/></svg>
                <svg class="w-[16px] h-4"><path d="M1 5h13v11H1zM2 5c0-7 11-7 11 0" fill="currentColor"/><path d="M4 4c2-3 5-3 6 0" fill="none" stroke="#eee"/></svg>
                <i class="w-px h-5 bg-[#808080]"></i>
                <svg class="w-[16px] h-4"><path d="M0 4h16l-8 9z" fill="currentColor"/></svg>
                <svg class="w-[16px] h-4"><path d="M0 12h16L8 3z" fill="currentColor"/></svg>
                <svg class="w-[16px] h-4"><path d="M16 1.500H1.500V10H12" fill="none" stroke="currentColor" stroke-width="2.500"/><path d="M10 5l6 5-6 5z" fill="currentColor"/></svg>
                <svg class="w-[16px] h-4"><path d="M2 6h12L8 0zM2 10h12l-6 6zM1 7h14v2H1z" fill="currentColor"/></svg>
                <i class="w-px h-5 bg-[#808080]"></i>
                <svg class="w-[16px] h-4"><path d="M0 3c5-3 8 3 15 0M0 8c5-3 8 3 15 0M0 13c3-3 5 0 7 0M7 8l8 7M8 1 2 13" fill="none" stroke="currentColor" stroke-width="1.500"/></svg>
                <svg class="w-[16px] h-4"><circle cx="6" cy="6" r="5" fill="none" stroke="currentColor" stroke-width="2"/><path d="M7 6h8v9H7z" fill="none" stroke="currentColor" stroke-width="1.500"/></svg>
            </div>
            <ul class="mt-[5px] ml-[3px] mr-[6px] flex-1 pl-[9px] pt-[1px] bg-white border border-[#808894] *:h-[16px] *:flex *:items-center">
                <li><svg class="w-[15px] h-4"><path d="M.5 3.500h8v8h-8zM2 7.500h5" fill="#fff" stroke="#788898"/><path d="M10 7.500h5" stroke="#555" stroke-dasharray="1 1"/></svg><svg class="size-4"><path d="M1 1h6v6H1zM9 1h6v6H9zM1 9h6v6H1zM9 9h6v6H9z" fill="#3ae0ff" stroke="#000080" stroke-width="1.200"/></svg><span class="ml-[3px] h-4 w-[21px] text-center leading-[16px] text-white bg-[#3399ff] font-['Liberation_Serif',serif]">T-1</span></li>
                <li class="pl-[19px]"><svg class="w-[15px] h-4"><path d="M.5 3.500h8v8h-8zM2 7.500h5M4.500 5v5" fill="#fff" stroke="#788898"/><path d="M10 7.500h5" stroke="#555" stroke-dasharray="1 1"/></svg><svg class="w-[15px] h-4"><path d="M1 13.500h13M3 13V7M7.500 13V3M11.500 13V6" stroke="#0000e0" stroke-width="2"/></svg><span class="ml-[5px]">屬性 - 100I</span></li>
                <li class="pl-[19px]"><svg class="w-[15px] h-4"><path d="M4.500 0v7.500h10" fill="none" stroke="#555" stroke-dasharray="1 1"/></svg><svg class="size-4"><path d="M0 0l15 8L0 15z" fill="#f00"/><path d="M0 0h2v15H0z" fill="#900"/></svg></li>
            </ul>
        </section>

        <!-- graphics area -->
        <section class="relative flex-1 mr-[2px] bg-black text-[#c0c0c0] border-l border-[#808080] font-['Noto_Sans_CJK_TC',sans-serif]">
            <p class="absolute left-[734px] top-[602px] text-[21px] leading-[26px] text-white">改這裡</p>
            <div class="absolute left-[7px] bottom-[10px]">
                <svg class="ml-[26px] mb-[12px] w-[50px] h-[46px] font-['Liberation_Sans',sans-serif] text-[12px]"><text x="3" y="14" fill="#0f0">Y</text><path d="M7 22v20" stroke="#0f0"/><path d="M7 41.500h20" stroke="#f00"/><text x="34" y="45" fill="#f00">X</text></svg>
                <div class="flex gap-[9px] whitespace-pre"><span>螢幕視角:俯視圖</span><span>WCS:俯視圖</span><span>刀具 / 構圖面:俯視圖</span></div>
            </div>
            <div class="absolute right-[23px] bottom-[10px] w-[97px] px-[24px]">
                <svg class="absolute inset-0 w-full h-[25px] mt-[1px]"><path d="M.5 0v24M96.500 0v24M0 12.500h97" stroke="#ff0"/></svg>
                <div class="-mt-[3px] mb-[3px] pl-[3px] text-[#0f0]">9.598</div>
                <div>公制</div>
            </div>
        </section>
    </main>

    <!-- status bar -->
    <footer class="h-[26px] shrink-0 flex items-center justify-end bg-[#f0eded] border-t border-[#808080] overflow-hidden whitespace-nowrap font-['Noto_Sans_CJK_TC',sans-serif]">
        <button class="w-[24px] h-[19px] border border-[#a8b4b4] rounded-[3px]">3D</button>
        <button class="ml-[6px] w-[62px] h-[19px] border border-[#a8b4b4] rounded-[3px]">螢幕視角</button>
        <button class="ml-[6px] w-[27px] h-[19px] border border-[#a8b4b4] rounded-[3px]">平面</button>
        <label for="zd" class="ml-[5px] w-[20px] h-[19px] pl-[5px] leading-[17px] border border-r-0 border-[#a8b4b4] rounded-l-[3px]">Z:</label>
        <div class="w-[83px] h-[23px] pl-[1px] flex items-center bg-white"><input id="zd" value="0.0" class="w-[63px] h-[20px] pl-[1px] bg-[#ffff80]"><svg class="ml-[8px] w-[8px] h-1"><use href="#arr"/></svg></div>
        <button class="ml-[6px] w-[32px] h-[19px] bg-[#0f0]">10</button>
        <button aria-label="Color" class="ml-[2px] w-[14px] h-[19px] grid place-items-center border border-[#a8b4b4]"><svg class="w-[9px] h-[8px]"><path d="M0 0h9L4.500 8z"/></svg></button>
        <label for="lv" class="ml-[6px] w-[35px] h-[19px] pl-[6px] leading-[17px] border border-r-0 border-[#a8b4b4] rounded-l-[3px]">層別:</label>
        <div class="w-[100px] h-[23px] flex items-center bg-white"><input id="lv" value="1" class="w-[80px] pl-[3px]"><svg class="ml-[8px] w-[8px] h-1"><use href="#arr"/></svg></div>
        <button class="ml-[7px] w-[32px] h-[19px] border border-[#a8b4b4] rounded-[3px]">屬性</button>
        <button aria-label="Point style" class="ml-[6px] w-[36px] h-[23px] flex items-center bg-white"><svg class="ml-[2px] w-[12px] h-[12px]"><path d="M1 6.500h10M6.500 1v11M10 3 3 10" stroke="#222"/></svg><svg class="ml-[10px] w-[8px] h-1"><use href="#arr"/></svg></button>
        <button aria-label="Line style" class="ml-[6px] w-[62px] h-[23px] flex items-center bg-white"><i class="ml-[2px] w-[41px] h-[3px] bg-black"></i><svg class="ml-[7px] w-[8px] h-1"><use href="#arr"/></svg></button>
        <button aria-label="Line width" class="ml-[6px] w-[68px] h-[23px] flex items-center bg-white"><i class="ml-[2px] w-[47px] h-px bg-black"></i><svg class="ml-[8px] w-[8px] h-1"><use href="#arr"/></svg></button>
        <button class="ml-[7px] w-[39px] h-[19px] border border-[#a8b4b4] rounded-[3px]">WCS</button>
        <button class="ml-[7px] w-[37px] h-[19px] border border-[#a8b4b4] rounded-[3px]">群組</button>
        <button class="ml-[7px] w-[12px] h-[19px] border border-[#a8b4b4] rounded-[3px]">!</button>
        <button class="ml-[6px] w-[10px] h-[19px] pl-[3px] border border-r-0 border-[#a8b4b4] rounded-l-[3px]">?</button>
    </footer>

    <!-- taskbar -->
    <div class="relative h-[30px] shrink-0 flex items-center text-white whitespace-nowrap border-t border-[#123a5c] bg-[linear-gradient(60deg,transparent_1150px,#9cc0de88_1170px,transparent_1190px),linear-gradient(90deg,#20609a_0,#2c719c_60px,#3b83a8_500px,#35779f_900px,#1f64a0_1000px,#1b5c98_1200px,#174f86_1400px,#174a80_1880px,#0c2c50_1920px)]">
        <button aria-label="Start" class="relative -mt-[2px] ml-[9px] size-[36px] shrink-0"><svg viewBox="0 0 36 36"><circle cx="18" cy="18" r="17.500" fill="#2a6a96" stroke="#123a5c"/><path d="M3 14a15.500 15.500 0 0 1 30 0c-9 4-20 4-30 0z" fill="#b9d3e4" opacity=".7"/><path d="M8 32c5-6 15-6 20 0-6 4-14 4-20 0z" fill="#2adcff"/><path d="M10 9c3-2 5-2 8 0l-2 8c-3-2-6-2-9 0z" fill="#ee5a24"/><path d="M19 10c3 2 6 2 10 0l-2 8c-4 2-7 2-10 0z" fill="#8cc63e"/><path d="M7 18c3-2 6-2 9 0l-2 8c-3-2-6-2-9 0z" fill="#2a9ae4"/><path d="M17 19c3 2 6 2 10 0l-2 8c-4 2-7 2-10 0z" fill="#ffc820"/></svg></button>
        <button class="ml-[14px] w-[159px] h-[28px] flex items-center pl-[10px] gap-[4px] border border-[#8db6cc] rounded-[2px] bg-white/20 shadow-[0_0_0_1px_#1a4560]"><svg class="w-[15px] h-[15px]" viewBox="0 0 16 16"><circle cx="8" cy="8" r="7.500" fill="#f4c20d"/><path d="M8 8 1.500 4A7.500 7.500 0 0 1 15 5H8z" fill="#db3a2c"/><path d="M1.500 4A7.500 7.500 0 0 0 7 15.500L10 10z" fill="#3c9a48"/><circle cx="8" cy="8" r="3" fill="#4a8af4" stroke="#fff"/></svg>X6后处理怎样把G02...</button>
        <svg class="ml-[17px] size-[17px]" viewBox="0 0 16 16"><path d="M13 9H4c0 5 6 5 8 2M4 8c0-6 9-6 9 0" fill="none" stroke="#5cc4fa" stroke-width="2.500"/><path d="M1 14C0 9 10 0 15 2" fill="none" stroke="#f4c020" stroke-width="1.500"/></svg>
        <svg class="ml-[29px] size-4"><use href="#disk"/><path d="M10 9h4l2 3-3 4-4-2z" fill="#e83a3a"/><path d="M1 12h8" stroke="#fff" stroke-width="2"/></svg>
        <svg class="ml-[29px] size-[17px]" viewBox="0 0 16 16"><path d="M0 3 9 0l7 3v9l-7 4-8-3z" fill="#d01818"/><path d="M0 3 9 0l7 3-8 2z" fill="#f06a5a"/><path d="M6 6H2v3h4v3H2M8 6l1 6 2-4 1 4 2-6" fill="none" stroke="#fff" stroke-width="1.300"/></svg>
        <button class="ml-[16px] w-[159px] h-[28px] flex items-center pl-[10px] gap-[5px] border border-[#c4dce8] rounded-[2px] bg-linear-to-r from-white/60 to-white/35 shadow-[0_0_0_1px_#1a4560]"><svg class="size-[15px]"><use href="#mx"/></svg>Mastercam 銑床 王...</button>
        <svg class="ml-[17px] w-[15px] h-4"><use href="#mx"/><path d="M14 1c-5 0-5 7-2 7s3-4-1-4" fill="none" stroke="#ddd"/></svg>
        <button class="ml-[17px] w-[160px] h-[28px] flex items-center pl-[10px] gap-[6px] border border-[#8db6cc] rounded-[2px] bg-linear-to-b from-white/40 to-white/10 shadow-[0_0_0_1px_#1a4560]"><svg class="w-[13px] h-4"><path d="M0 1h6v14H0z" fill="#f4dc88"/><path d="M5 3h7v12H4z" fill="#ffeaa0" stroke="#c8a040"/></svg>posts</button>
        <svg class="ml-[17px] w-[12px] h-4"><path d="M.5.5h11v15H.5z" fill="#a8d0ee" stroke="#dff0ff"/><path d="M2 2h8v3H2z" fill="#fff"/><path d="M2 8h8M2 11h8M2 14h5" stroke="#446a90" stroke-dasharray="2 1"/><path d="M8 11h2v3H8z" fill="#f08a20"/></svg>
        <svg class="ml-[32px] size-4"><circle cx="8" cy="8" r="7.500" fill="#e8902c"/><path d="M1 7a7 7 0 0 1 14 0c-4 3-10-2-14 0z" fill="#ccc"/><path d="M4 8h8v3H4z" fill="#7a3c1c"/></svg>
        <button class="ml-[17px] w-[159px] h-[28px] flex items-center pl-[8px] gap-[5px] border border-[#8db6cc] rounded-[2px] bg-linear-to-b from-white/45 to-white/15 shadow-[0_0_0_1px_#1a4560]"><svg class="size-4"><path d="M1 2h10v13H1z" fill="#fff" stroke="#000" stroke-width="1.500"/><path d="M3 5h4M3 8h4M3 11h5" stroke="#000"/><path d="M8 9l6-7 2 2-6 6z" fill="#ff0" stroke="#000" stroke-width=".7"/></svg>Programmer's File E...</button>

        <div class="relative ml-auto flex items-center">
            <svg class="w-[16px] h-[15px]"><path d="M.5 6.500h15v8H.5z" fill="#888" stroke="#ddd"/><path d="M2 9h12M2 12h12" stroke="#fff" stroke-dasharray="1 1"/><path d="M5 5c0-4 8 0 9-5" fill="none" stroke="#aaa"/></svg>
            <svg class="ml-[10px] w-[8px] h-[18px]"><path d="M2.500.5h5v4h-5zM.500 2.500h5v4h-5z" fill="#345" stroke="#fff"/><path d="M1 13h6l-3 4z" fill="#fff"/></svg>
            <svg class="ml-[9px] size-3"><use href="#mx"/></svg>
            <svg class="size-3 mt-3"><path d="M0 0h12v12H0z" fill="#a8a8e8"/></svg>
            <svg class="ml-[6px] mb-2 size-3"><path d="M1 6l4 5L12 0" fill="none" stroke="#00d020" stroke-width="3"/></svg>
            <svg class="ml-[52px] mb-2 w-4 h-3"><path d="M3 0v12M3 1h9l-2 3 2 3H3" fill="#fff" stroke="#fff"/></svg>
            <span class="ml-[62px] mr-[13px] mb-[8px]">17:12</span>
            <strong class="absolute right-[4px] top-[3px] text-[17px] leading-[18px] font-semibold text-white [-webkit-text-stroke:2px_#e02020] [paint-order:stroke_fill]">三维网www.3dportal.cn</strong>
        </div>
        <button aria-label="Show desktop" class="w-[14px] h-full border border-[#6c8cae] bg-black/20"></button>
    </div>

    <!-- control definition dialog -->
    <div role="dialog" aria-labelledby="dlg" class="absolute left-[166px] top-[302px] w-[841px] px-[7px] pb-[6px] rounded-[6px] border border-[#1c242c] shadow-[0_0_12px_3px_#000b,inset_0_0_0_1px_#ffffff99] bg-[linear-gradient(90deg,#b8d8f8_0,#acd0f4_190px,#0c1218_198px,#10181e_100%)] font-['Noto_Sans_CJK_TC',sans-serif]">
        <div class="-mx-[6px] h-[27px] flex items-center pl-[6px] rounded-t-[5px] bg-[linear-gradient(90deg,#e4f1fe_0,#c8def6_190px,#12161c_200px,#1c242c_420px,#080c10_540px,#3c4248_680px,#70757a_100%)] font-['Open_Sans','Noto_Sans_CJK_TC',sans-serif]">
            <h2 id="dlg" class="relative whitespace-pre"><span class="absolute -inset-x-2 inset-y-0 bg-white/35 blur-[5px]"></span><span class="relative">自定義控制器： D:\Program Files (x86)\mcamx4\CNC_MACHINES\100I.CONTROL</span></h2>
            <button aria-label="Close" class="ml-auto mr-[4px] self-start w-[48px] h-[19px] grid place-items-center rounded-b-[4px] border border-t-0 border-[#e8c8c0] bg-linear-to-b from-[#d89888] via-[#b02818] to-[#d05030]"><svg class="w-3 h-3"><path d="M2 1l8 9M10 1l-8 9" stroke="#444" stroke-width="4.500"/><path d="M2 1l8 9M10 1l-8 9" stroke="#fff" stroke-width="2.500"/></svg></button>
        </div>

        <div class="border border-[#606870] bg-[#f0f0f0]">
            <div class="h-[41px] flex items-center pl-[9px] pb-[2px] border-2 border-b-0 border-r-[#d0d4e4] border-white shadow-[0_1px_0_#98a0ac]">
                <svg class="w-5 h-6"><use href="#new"/></svg>
                <svg class="ml-[9px] size-6"><use href="#open"/></svg>
                <svg class="ml-[8px] w-[22px] h-[22px]"><use href="#disk"/></svg>
                <svg class="ml-[8px] size-6"><use href="#disks"/></svg>
                <svg class="ml-[7px] size-6"><path d="M1 12V5c0-6 10-6 10 0v6" fill="none" stroke="#888" stroke-width="2.500"/><path d="M7 9h16v14H7z" fill="#f0c040" stroke="#b88a20"/><circle cx="15" cy="16" r="4.500" fill="#ffe060" stroke="#a87000"/><path d="M15 13v6" stroke="#603000" stroke-width="2"/></svg>
            </div>

            <form class="px-[5px] pt-[3px] pb-[16px]">
                <div class="flex justify-between h-[49px]">
                    <div class="grid grid-rows-[20px_24px] gap-y-[4px] pl-[1px]">
                        <div class="flex items-center">
                            <button type="button" class="w-[103px] h-[20px] border border-[#707070] rounded-[3px] bg-linear-to-b from-[#f2f2f2] to-[#cfcfcf]">現有的定義</button>
                            <label for="ctype" class="ml-[17px] w-[80px]">控制器類型：</label>
                            <div class="relative"><select id="ctype" class="appearance-none w-[188px] h-[20px] pl-[3px] leading-[16px] border border-[#707070] rounded-[3px] bg-linear-to-b from-[#f2f2f2] to-[#cfcfcf]"><option>銑床</option></select><svg class="absolute right-[4px] top-[9px] w-2 h-1 pointer-events-none"><use href="#arr"/></svg></div>
                        </div>
                        <div class="flex items-start">
                            <button type="button" class="w-[103px] h-[20px] border border-[#707070] rounded-[3px] bg-linear-to-b from-[#f2f2f2] to-[#cfcfcf]">後處理程式：</button>
                            <div class="relative ml-[6px]">
                                <select aria-label="Post processor" class="appearance-none w-[279px] h-[23px] pl-[21px] pr-[20px] pb-[4px] text-[10px] font-['Liberation_Mono',monospace] border border-[#e0e4ee] bg-white overflow-hidden text-clip!"><option>D:\Program Files (x86)\mcamx4\mill\posts</option></select>
                                <svg class="absolute left-[4px] top-[4px] w-[14px] h-4 pointer-events-none"><path d="M1 1h9l3 3v11H1z" fill="#fff" stroke="#000" stroke-width="1.500"/><path d="M3 9l3 4 6-7" fill="none" stroke="#00d800" stroke-width="2"/></svg>
                                <svg class="absolute right-[4px] top-[11px] w-2 h-1 pointer-events-none"><use href="#arr"/></svg>
                            </div>
                        </div>
                    </div>
                    <div class="grid grid-cols-[48px_324px] grid-rows-[20px_20px] gap-x-[5px] gap-y-[5px] items-center pr-[1px]">
                        <label for="mk" class="text-right whitespace-nowrap">製造商：</label>
                        <input id="mk" value="100I" class="h-[20px] px-[3px] pb-[2px] text-[10px] font-['Liberation_Mono',monospace] bg-white border border-[#e0e4ee] border-t-[#a8acb4]">
                        <label for="ds" class="text-right whitespace-nowrap">描述：</label>
                        <input id="ds" value="NONE" class="h-[20px] px-[3px] pb-[2px] text-[10px] font-['Liberation_Mono',monospace] bg-white border border-[#e0e4ee] border-t-[#a8acb4]">
                    </div>
                </div>

                <div class="flex">
                    <!-- topic tree -->
                    <div class="w-[151px] shrink-0 pt-[4px]">
                        <p class="pl-[5px] mb-[5px]">控制器系統資訊：</p>
                        <div class="h-[361px] pl-[12px] pt-[1px] bg-white border border-[#808894]">
                            <ul class="h-[280px] border-l border-dotted border-[#707070] whitespace-nowrap *:h-[16px] *:flex *:items-center">
                                <li><i class="w-[10px] border-t border-dotted border-[#707070]"></i><svg class="ml-[1px] mr-[4px] size-4"><use href="#ck"/></svg>公差設定</li>
                                <li><i class="w-[10px] border-t border-dotted border-[#707070]"></i><svg class="ml-[1px] mr-[4px] size-4"><use href="#ck"/></svg>傳輸參數</li>
                                <li><i class="w-[10px] border-t border-dotted border-[#707070]"></i><svg class="ml-[1px] mr-[4px] size-4"><use href="#ck"/></svg>檔案</li>
                                <li><i class="ml-[18px] w-[11px] h-4 mb-4 border-l border-b border-dotted border-[#707070]"></i><svg class="mr-[3px] size-4"><use href="#ck"/></svg><span class="px-[1px] bg-[#f0f0f0]">銑床</span></li>
                                <li><i class="w-[10px] border-t border-dotted border-[#707070]"></i><svg class="ml-[3px] mr-[6px] w-3 h-4"><use href="#mq"/></svg>NC 對話窗</li>
                                <li><i class="w-[10px] border-t border-dotted border-[#707070]"></i><svg class="ml-[3px] mr-[6px] w-3 h-4"><use href="#mq"/></svg>NC 輸出</li>
                                <li><i class="w-[10px] border-t border-dotted border-[#707070]"></i><svg class="ml-[3px] mr-[6px] w-3 h-4"><use href="#mq"/></svg>雜項整／實變數</li>
                                <li><i class="w-[10px] border-t border-dotted border-[#707070]"></i><svg class="ml-[3px] mr-[6px] w-3 h-4"><use href="#mq"/></svg>工作系統</li>
                                <li><i class="w-[10px] border-t border-dotted border-[#707070]"></i><svg class="ml-[3px] mr-[6px] w-3 h-4"><use href="#mq"/></svg>刀具</li>
                                <li><i class="w-[10px] border-t border-dotted border-[#707070]"></i><svg class="ml-[3px] mr-[6px] w-3 h-4"><use href="#mq"/></svg>直線</li>
                                <li><i class="w-[10px] border-t border-dotted border-[#707070]"></i><svg class="ml-[3px] mr-[6px] w-3 h-4"><use href="#mq"/></svg>圓弧</li>
                                <li><i class="w-[10px] border-t border-dotted border-[#707070]"></i><svg class="ml-[3px] mr-[6px] w-3 h-4"><use href="#mq"/></svg>旋轉</li>
                                <li><i class="w-[10px] border-t border-dotted border-[#707070]"></i><svg class="ml-[3px] mr-[6px] w-3 h-4"><use href="#mq"/></svg>進給率</li>
                                <li><i class="w-[10px] border-t border-dotted border-[#707070]"></i><svg class="ml-[3px] mr-[6px] w-3 h-4"><use href="#mq"/></svg>刀具補償</li>
                                <li><i class="w-[10px] border-t border-dotted border-[#707070]"></i><svg class="ml-[3px] mr-[6px] w-3 h-4"><use href="#mq"/></svg>加工循環</li>
                                <li><i class="w-[10px] border-t border-dotted border-[#707070]"></i><svg class="ml-[3px] mr-[6px] w-3 h-4"><use href="#mq"/></svg>副程式</li>
                                <li><i class="w-[10px] border-t border-dotted border-[#707070]"></i><svg class="ml-[3px] mr-[6px] w-3 h-4"><use href="#mq"/></svg>操作預設</li>
                                <li><i class="w-[10px] border-t border-dotted border-[#707070]"></i><svg class="ml-[3px] mr-[6px] w-3 h-4"><use href="#mq"/></svg>文字</li>
                            </ul>
                        </div>
                    </div>

                    <div class="flex-1 pl-[11px] pt-[9px] flex flex-col">
                        <div class="pl-[9px] w-[617px]">
                            <fieldset class="h-[129px] border border-[#d4dce4] rounded-[3px] pl-[5px]">
                                <legend class="px-[2px]">使用的檔案</legend>
                                <div class="flex gap-[12px] pt-[3px]">
                                    <ul role="listbox" class="w-[240px] h-[104px] p-px bg-white border border-[#707880] leading-[12px] *:px-[2px]">
                                        <li class="bg-[#3399ff] text-white">加工報表樣板</li>
                                        <li>後處理執行程式</li>
                                        <li>從雜項變數按鈕執行的應用程式</li>
                                        <li>操作資料庫 (英吋)</li>
                                        <li>操作資料庫 (毫米)</li>
                                        <li>預設 操作資料庫 (英吋)</li>
                                        <li>預設 操作資料庫 (毫米)</li>
                                    </ul>
                                    <div class="flex flex-col gap-[3px] pt-[1px]">
                                        <label for="f1">選擇項目檔名：</label>
                                        <div class="flex items-center">
                                            <input id="f1" value="D:\Program Files (x86)\mcamx4\Mill\Posts\Mill.set" class="w-[308px] h-[20px] px-[3px] pb-[2px] text-[10px] font-['Liberation_Mono',monospace] bg-white border border-[#e0e4ee] border-t-[#a8acb4]">
                                            <i class="ml-[8px] w-px h-4 bg-[#808080]"></i>
                                            <svg class="ml-[5px] w-[13px] h-4"><path d="M1 4l3-3h8v11l-3 3H1z" fill="#8a8a00" stroke="#000" stroke-width="1.500"/><path d="M4 1h8L9 4H1z" fill="#ff6"/><path d="M9 4l3-3v11l-3 3z" fill="#ddd"/><path d="M2.500 6.500h5v2h-5zM2.500 11.500h5v2h-5z" fill="#ffffa0" stroke="#000"/></svg>
                                        </div>
                                        <p class="pt-[5px]">指定此項目標資料路徑：</p>
                                        <p class="pt-[2px] text-[10px] font-['Liberation_Mono',monospace]">D:\Program Files (x86)\mcamx4\Mill\Posts</p>
                                        <label class="pt-[1px] flex items-center gap-[3px] text-[#808080]"><input type="checkbox" disabled class="appearance-none size-[13px] border border-[#b4b4b4] bg-[#f8f8f8]">啟用雜項變數應用程式工作按鈕</label>
                                    </div>
                                </div>
                            </fieldset>
                            <fieldset class="mt-[1px] h-[63px] border border-[#d4dce4] rounded-[3px] pl-[5px]">
                                <legend class="px-[2px]">資料路徑</legend>
                                <div class="flex gap-[12px] pt-[4px]">
                                    <ul role="listbox" class="w-[240px] h-[39px] p-px bg-white border border-[#707880] leading-[12px] *:px-[2px]">
                                        <li class="bg-[#3399ff] text-white">NC 程式 (NC)</li>
                                        <li>刀具路徑 (NCI)</li>
                                    </ul>
                                    <div class="flex flex-col gap-[3px]">
                                        <label for="f2">選擇項目的資料路徑：</label>
                                        <div class="flex items-center">
                                            <input id="f2" value="e:\NC\" class="w-[308px] h-[20px] px-[3px] pb-[2px] text-[10px] font-['Liberation_Mono',monospace] bg-white border border-[#e0e4ee] border-t-[#a8acb4]">
                                            <i class="ml-[8px] w-px h-4 bg-[#808080]"></i>
                                            <svg class="ml-[1px] w-[20px] h-[18px]"><path d="M4 3h5M6 3v14M6 13h5" stroke="#888"/><path d="M1.500 1.500h3v3h-3zM4.500 11.500h3v3h-3z" fill="#fff" stroke="#555"/><path d="M9 3l1-1h3l1 1h3v4H9zM12 12l1-1h3l1 1h2v4h-7z" fill="#ff0" stroke="#333"/></svg>
                                        </div>
                                    </div>
                                </div>
                            </fieldset>
                        </div>

                        <div class="flex gap-[18px] pl-[9px] mt-[3px]">
                            <div class="w-[301px]">
                                <fieldset class="h-[106px] border border-b-0 border-[#d4dce4] rounded-t-[3px] pl-[5px]">
                                    <legend class="px-[2px]">後處理錯誤檔案</legend>
                                    <label for="s1" class="block mt-[2px] mb-[7px]">保留錯誤檔案：</label>
                                    <div class="relative w-[285px]"><select id="s1" class="appearance-none w-full h-[20px] pl-[3px] leading-[16px] border border-[#707070] rounded-[3px] bg-linear-to-b from-[#f2f2f2] to-[#cfcfcf]"><option>致命的錯誤資訊</option></select><svg class="absolute right-[4px] top-[9px] w-2 h-1 pointer-events-none"><use href="#arr"/></svg></div>
                                    <label for="s2" class="block mt-[2px] mb-[6px]">資訊選項</label>
                                    <div class="relative w-[285px]"><select id="s2" class="appearance-none w-full h-[20px] pl-[3px] leading-[16px] border border-[#707070] rounded-[3px] bg-linear-to-b from-[#f2f2f2] to-[#cfcfcf]"><option>所有錯誤資訊傳至檔案</option></select><svg class="absolute right-[4px] top-[9px] w-2 h-1 pointer-events-none"><use href="#arr"/></svg></div>
                                </fieldset>
                                <fieldset class="mt-[6px] w-[299px] h-[57px] border border-b-0 border-[#d4dce4] rounded-t-[3px] pl-[8px]">
                                    <legend class="-ml-[3px] px-[2px]">NC 檔案副檔名</legend>
                                    <input aria-label="NC 檔案副檔名" value=".nc" class="mt-[10px] w-[276px] h-[20px] px-[4px] pb-[2px] text-[10px] font-['Liberation_Mono',monospace] bg-white border border-[#e0e4ee] border-t-[#a8acb4]">
                                </fieldset>
                            </div>
                            <div class="pt-[40px] w-[278px]">
                                <fieldset class="h-[63px] border border-[#d4dce4] rounded-[3px] pl-[6px]">
                                    <legend class="px-px">轉換操作選項</legend>
                                    <label class="h-[15px] flex items-center gap-[4px]"><input type="radio" name="tr" class="appearance-none size-3 rounded-full border border-[#909090] bg-[#e8e8e8]">只有轉換操作參數</label>
                                    <label class="h-[15px] flex items-center gap-[4px]"><input type="radio" name="tr" checked class="appearance-none size-3 rounded-full border border-[#707070] bg-[radial-gradient(circle,#30a8e0_1px,#103a6c_3px,#e8e8e8_4px)]">只有來源操作參數</label>
                                    <label class="h-[15px] flex items-center gap-[4px]"><input type="radio" name="tr" class="appearance-none size-3 rounded-full border border-[#909090] bg-[#e8e8e8]">轉換以及來源兩者參數</label>
                                </fieldset>
                                <button type="button" class="mt-[33px] ml-[44px] w-[192px] h-[20px] border border-[#3a7ca8] rounded-[3px] shadow-[inset_0_0_0_1px_#5cd0fa] bg-linear-to-b from-[#f2f2f2] to-[#cfcfcf]">後處理對話窗</button>
                            </div>
                        </div>

                        <div class="mt-[23px] flex items-end">
                            <p class="w-[453px] h-[48px] pl-[2px] pr-[14px] pt-[2px] leading-[12px] text-[#808080] border border-[#b0b4b8] rounded-[2px]">檔案一般設定 - 設定預設的檔案及路徑，可由刀具路徑管理員群組對話窗來覆寫這些設定，輸入發生錯誤誤訊息的選項是由此頁設定.</p>
                            <div class="flex gap-[11px] ml-[18px] -mb-[9px] *:w-[52px] *:h-[26px] *:grid *:place-items-center *:border *:border-[#707070] *:rounded-[3px] *:bg-linear-to-b *:from-[#f2f2f2] *:to-[#cfcfcf]">
                                <button aria-label="OK"><svg class="w-[18px] h-[19px]"><path d="M1 9l3-2 3 4L16 0l1 1L8 18H6z" fill="#30c020" stroke="#0c7a0c"/></svg></button>
                                <button aria-label="Cancel"><svg class="w-[20px] h-[19px]"><path d="M1 4l4-3 5 5 5-5 4 4-5 5 5 5-4 4-5-5-5 4-4-4 5-4z" fill="#ff3c10" stroke="#b01800"/></svg></button>
                                <button aria-label="Help"><svg class="w-[16px] h-5"><use href="#q"/></svg></button>
                            </div>
                        </div>
                    </div>
                </div>
            </form>
        </div>
    </div>

    <!-- red pen notes over the dialog -->
    <div class="absolute left-[335px] top-[735px] w-[337px] h-[68px] border-[5px] border-[#ed1c24] pointer-events-none"></div>
    <svg class="absolute left-[680px] top-[736px] w-[400px] h-[48px] pointer-events-none"><path d="M6 17l25-2 40 0 44-1 29-2 27 4 39 1 43 2 42 0 20-1 37-2 31-2 13-4M6 17l19-13M6 17l6 6 8 19" fill="none" stroke="#ed1c24" stroke-width="3" stroke-linecap="round"/></svg>
</body>
</html>
